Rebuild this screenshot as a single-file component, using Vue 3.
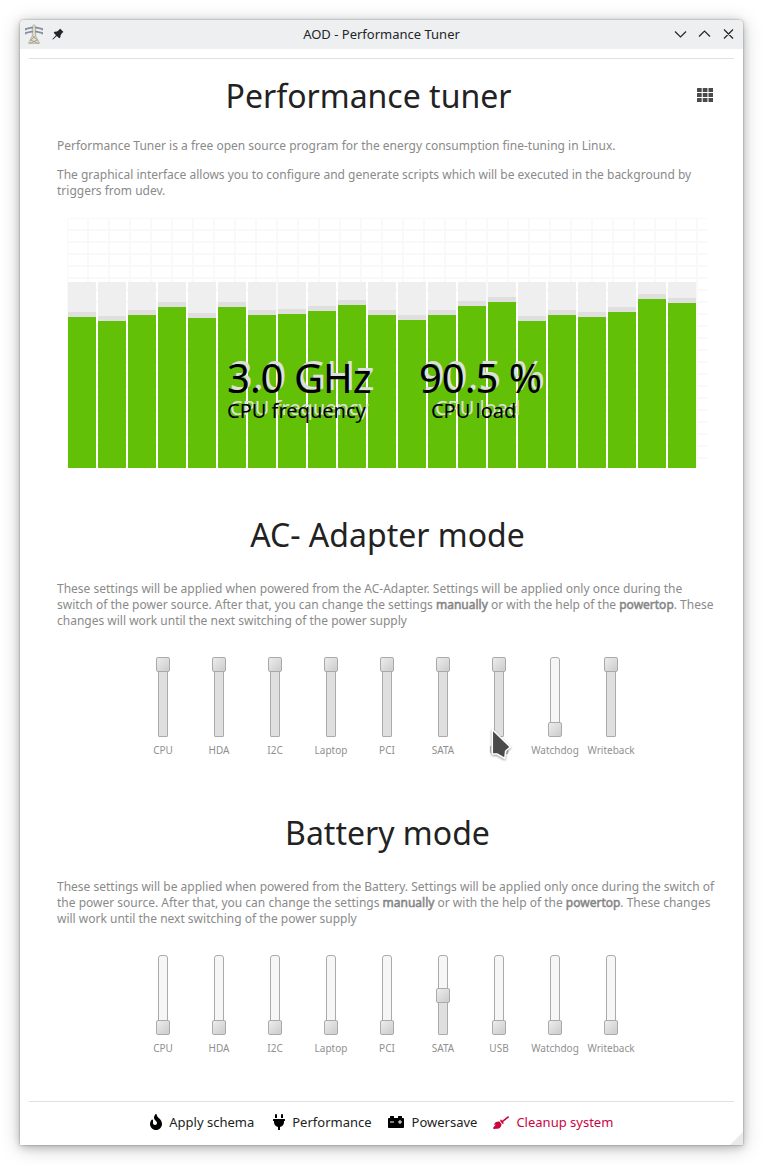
<script setup>
const tops = [317, 321, 315, 307, 318, 307, 315, 314, 311, 305, 315, 320, 315, 306, 302, 321, 315, 317, 312, 299, 303]
const names = ['CPU', 'HDA', 'I2C', 'Laptop', 'PCI', 'SATA', 'USB', 'Watchdog', 'Writeback']
const modes = [
  {
    title: 'AC- Adapter mode', cls: 'ac',
    about: 'These settings will be applied when powered from the AC-Adapter. Settings will be applied only once during the switch of the power source. After that, you can change the settings',
    values: [100, 100, 100, 100, 100, 100, 100, 0, 100]
  },
  {
    title: 'Battery mode', cls: 'battery',
    about: 'These settings will be applied when powered from the Battery. Settings will be applied only once during the switch of the power source. After that, you can change the settings',
    values: [0, 0, 0, 0, 0, 50, 0, 0, 0]
  }
]
const actions = [
  { label: 'Apply schema', cls: 'fire', box: '0 0 384 512', d: 'M216 23.86c0-23.8-30.65-32.77-44.15-13.04C48 191.85 224 200 224 288c0 35.63-29.11 64.46-64.85 63.99-35.17-.45-63.15-29.77-63.15-64.94v-85.51c0-21.7-26.47-32.23-41.43-16.5C27.8 213.16 0 261.33 0 320c0 105.87 86.13 192 192 192s192-86.13 192-192c0-170.29-168-193-168-296.14z' },
  { label: 'Performance', cls: 'plug', box: '0 0 384 512', d: 'M320,32a32,32,0,0,0-64,0v96h64Zm48,128H16A16,16,0,0,0,0,176v32a16,16,0,0,0,16,16H32v32A160.07,160.07,0,0,0,160,412.8V512h64V412.8A160.07,160.07,0,0,0,352,256V224h16a16,16,0,0,0,16-16V176A16,16,0,0,0,368,160ZM128,32a32,32,0,0,0-64,0v96h64Z' },
  { label: 'Powersave', cls: 'cell', box: '0 0 512 512', d: 'M480 128h-32V80c0-8.84-7.16-16-16-16h-96c-8.84 0-16 7.16-16 16v48H192V80c0-8.84-7.16-16-16-16H80c-8.84 0-16 7.16-16 16v48H32c-17.67 0-32 14.33-32 32v256c0 17.67 14.33 32 32 32h448c17.67 0 32-14.33 32-32V160c0-17.67-14.33-32-32-32zM192 264c0 4.42-3.58 8-8 8H72c-4.42 0-8-3.58-8-8v-16c0-4.42 3.58-8 8-8h112c4.42 0 8 3.58 8 8v16zm256 0c0 4.42-3.58 8-8 8h-40v40c0 4.42-3.58 8-8 8h-16c-4.42 0-8-3.58-8-8v-40h-40c-4.42 0-8-3.58-8-8v-16c0-4.42 3.58-8 8-8h40v-40c0-4.42 3.58-8 8-8h16c4.42 0 8 3.58 8 8v40h40c4.42 0 8 3.58 8 8v16z' },
  { label: 'Cleanup system', cls: 'broom', box: '0 0 640 512', d: 'M256.47 216.77l86.73 109.18s-16.6 102.36-76.57 150.12C206.66 523.85 0 510.19 0 510.19s3.8-23.14 11-55.43l94.62-112.17c3.97-4.7-.87-11.62-6.65-9.5l-60.4 22.09c14.44-41.66 32.72-80.04 54.6-97.47 59.97-47.76 163.3-40.94 163.3-40.94zM636.53 31.03l-19.86-25c-5.49-6.9-15.52-8.05-22.41-2.56l-232.48 177.8-34.14-42.97c-5.09-6.41-15.14-5.21-18.59 2.21l-25.33 54.55 86.73 109.18 58.8-12.45c8-1.69 11.42-11.2 6.34-17.6l-34.09-42.92 232.48-177.8c6.89-5.48 8.04-15.53 2.55-22.44z' }
]
</script>

<template>
  <div class="desktop">
    <div class="window">
      <header class="titlebar">
        <div class="left">
          <svg class="tower" viewBox="0 0 18 20">
            <path d="M7.300 2.500L9 .5l1.700 2V12l3.800 7.300h-11L7.300 12z" fill="#e3decb" stroke="#b5b09c" stroke-width=".9" />
            <path d="M7.500 12l5 4-8 3.500M10.500 12l-5 4 8 3.500" stroke="#98958a" stroke-width=".8" fill="none" />
            <path d="M.8 6.300V5L6.500 3.700h5L17.200 5v1.300M.8 10.300V9l5.700-1.300h5L17.200 9v1.300" fill="none" stroke="#858e9d" stroke-width="1.700" />
            <path d="M8 2.500h2v9H8z" fill="#dfdac6" />
          </svg>
          <svg class="pin" viewBox="0 0 12 12">
            <path d="M8 .5L11.500 4 10.300 4.700 8.700 7 8.300 9.500 7.200 10.300 4.800 8 1 11.500.5 11.500.5 11 4 7.200 1.700 4.800 2.500 3.700 5 3.500 7.300 1.700z" fill="#232629" />
          </svg>
        </div>
        <span class="caption">AOD - Performance Tuner</span>
        <svg class="controls" viewBox="0 0 60 12">
          <path d="M1 3.500L6.500 9 12 3.500M25 8.500L30.500 3 36 8.500M50 1.500l9 9M59 1.500l-9 9" fill="none" stroke="#232629" stroke-width="1.200" />
        </svg>
      </header>

      <main>
        <div class="head">
          <h1>Performance tuner</h1>
          <svg class="grid-icon" viewBox="0 0 16 14" fill="#4a4a4a">
            <g v-for="r in 3" :key="r">
              <rect v-for="c in 3" :key="c" :x="(c - 1) * 5.75" :y="(r - 1) * 5" width="4.700" height="4" rx=".6" />
            </g>
          </svg>
        </div>
        <p class="intro">Performance Tuner is a free open source program for the energy consumption fine-tuning in Linux.</p>
        <p class="intro second">The graphical interface allows you to configure and generate scripts which will be executed in the background by triggers from udev.</p>

        <div class="chart">
          <div class="bars">
            <div v-for="(t, i) in tops" :key="i" class="bar">
              <div class="fill" :style="{ height: 468 - t + 'px' }"></div>
            </div>
          </div>
          <div class="stats">
            <div class="stat freq"><b>3.0 GHz</b><span>CPU frequency</span></div>
            <div class="stat load"><b>90.5 %</b><span>CPU load</span></div>
          </div>
        </div>

        <section v-for="m in modes" :key="m.title" :class="m.cls">
          <h2>{{ m.title }}</h2>
          <p class="about">{{ m.about }} <strong>manually</strong> or with the help of the <strong>powertop</strong>. These changes will work until the next switching of the power supply</p>
          <div class="sliders">
            <div v-for="(n, i) in names" :key="n" class="slider">
              <div class="track">
                <div class="level" :style="{ height: m.values[i] + '%' }"></div>
                <div class="knob" :style="{ top: (100 - m.values[i]) * 0.65 - 1 + 'px' }"></div>
              </div>
              <span>{{ n }}</span>
            </div>
          </div>
        </section>
      </main>

      <footer>
        <a v-for="x in actions" :key="x.label" :class="x.cls">
          <svg :viewBox="x.box"><path :d="x.d" fill="currentColor" /></svg><span>{{ x.label }}</span>
        </a>
      </footer>
      <i class="grip"></i>
    </div>
    <svg class="cursor" viewBox="0 0 26 36">
      <path d="M3.300 1.500v24.500h4.700l7.800 4.500.8-7.500 4.700-4z" fill="#4a4a4a" stroke="#fff" stroke-width="1.500" stroke-linejoin="round" />
    </svg>
  </div>
</template>

<style>
body { background: #fff; }
</style>

<style scoped>
* { box-sizing: border-box; }
.desktop { position: relative; width: 763px; height: 1165px; padding: 20px; overflow: hidden; font-family: "Noto Sans", sans-serif; }
.window { position: relative; width: 723px; height: 1125px; display: flex; flex-direction: column; background: #fff; border-radius: 4px 4px 0 0; box-shadow: 0 0 2px rgba(0,0,0,.4), 0 2px 8px rgba(0,0,0,.2), 0 3px 20px rgba(0,0,0,.22); }
.titlebar { height: 29px; flex: none; display: grid; grid-template-columns: 1fr auto 1fr; align-items: center; background: #eeeff1; border-radius: 4px 4px 0 0; color: #232629; }
.left { display: flex; align-items: center; padding-left: 5px; }
.tower { width: 18px; height: 20px; margin-top: -1px; }
.pin { width: 12px; height: 12px; margin: -1px 0 0 9px; }
.caption { font-size: 13px; line-height: 29px; white-space: nowrap; }
.controls { width: 60px; height: 12px; justify-self: end; margin: -1px 9px 0 0; }
main { margin: 9px 9px 0; border-top: 1px solid #e0e0e0; padding: 0 20px 0 28px; flex: none; height: 1043px; }
.head { position: relative; height: 79px; padding-top: 15px; }
h1, h2 { margin: 0; font-weight: 400; font-size: 32px; line-height: 44px; color: #222; text-align: center; white-space: nowrap; }
h1 { padding-right: 34px; }
.grid-icon { position: absolute; right: 1px; top: 29px; width: 16px; height: 14px; }
p { margin: 0; font-size: 12px; line-height: 16px; color: #8a8a8a; width: 660px; }
.intro.second { margin-top: 13px; width: 645px; }
strong { font-weight: 400; -webkit-text-stroke: .5px #858585; color: #858585; }
.chart { position: relative; width: 640px; height: 250px; margin: 19px 0 0 10px; padding: 64px 0 0 1px;
  background-image: linear-gradient(90deg, #f9f9f9 1px, transparent 1px 20px, #f9f9f9 20px), linear-gradient(#f9f9f9 1px, transparent 1px 11px, #f9f9f9 11px);
  background-size: 21px 12px; }
.bars { display: flex; gap: 2px; }
.bar { width: 28px; height: 186px; background: #efefef; display: flex; align-items: flex-end; }
.fill { width: 28px; background: #62c007; box-shadow: 0 -5px #dfdfdf; }
.stats { position: absolute; left: 160px; top: 132px; display: flex; color: #000; text-shadow: 3px -3px #dfdfdf; }
.stat { display: flex; flex-direction: column; white-space: nowrap; }
.stat b { font-weight: 400; font-size: 40px; line-height: 55px; }
.stat span { font-size: 20px; line-height: 27px; margin-top: -8px; text-shadow: 4px -3px #dfdfdf; }
.freq span { text-shadow: 3px -3px #dfdfdf; }
.load { margin-left: 47.5px; }
.load span { padding-left: 12px; }
.ac { height: 298px; margin-top: 45px; }
h2 { width: 661px; height: 68px; }
.sliders { display: flex; margin: 28px 0 0 78px; }
.slider { width: 56px; display: flex; flex-direction: column; align-items: center; }
.slider span { font-size: 10px; line-height: 14px; color: #8f8f8f; margin-top: 6px; white-space: nowrap; }
.track { position: relative; width: 10px; height: 80px; border: 1px solid #aaa; border-radius: 3px 3px 1px 1px; background: #f6f6f6; display: flex; align-items: flex-end; }
.level { width: 100%; background: #dfdfdf; }
.knob { position: absolute; left: -3px; width: 14px; height: 15px; border: 1px solid #aaa; border-radius: 2px; background: linear-gradient(135deg, #ececec, #ccc); }
footer { margin: 0 9px; height: 44px; border-top: 1px solid #e0e0e0; display: flex; padding-left: 121px; font-size: 13px; line-height: 41px; color: #222; }
footer a { display: flex; align-items: center; height: 41px; white-space: nowrap; }
footer svg { height: 16px; color: #000; margin-top: -1px; }
.fire svg, .plug svg { width: 12px; margin-right: 7.3px; }
.plug { margin-left: 18.7px; }
.cell { margin-left: 16.7px; }
.cell svg { width: 16px; margin-right: 7.3px; }
.broom { margin-left: 15.5px; color: #c9053f; }
.broom svg { width: 16px; height: 13px; color: inherit; margin-right: 7.5px; }
.grip { position: absolute; right: 0; bottom: 0; width: 13px; height: 13px; background: #e9eaec; clip-path: polygon(100% 0, 100% 100%, 0 100%); }
.cursor { position: absolute; left: 489px; top: 728px; width: 26px; height: 36px; filter: drop-shadow(0 1px 1px rgba(0,0,0,.4)); }
</style>
